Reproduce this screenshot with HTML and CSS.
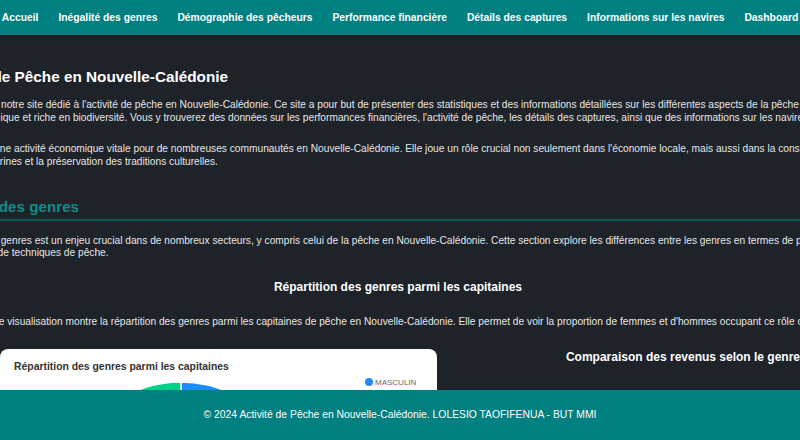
FILE: index.html
```html
<!DOCTYPE html>
<html lang="fr">
<head>
    <meta charset="UTF-8">
    <meta name="viewport" content="width=device-width, initial-scale=1.0">
    <title>Activité de Pêche en Nouvelle-Calédonie</title>
    <link rel="stylesheet" href="styles.css">
</head>
<body>
    <nav class="navbar">
        <ul class="nav-links">
            <li><a href="#">Accueil</a></li>
            <li><a href="#">Inégalité des genres</a></li>
            <li><a href="#">Démographie des pêcheurs</a></li>
            <li><a href="#">Performance financière</a></li>
            <li><a href="#">Détails des captures</a></li>
            <li><a href="#">Informations sur les navires</a></li>
            <li><a href="#">Dashboard</a></li>
        </ul>
    </nav>

    <main class="container">
        <section class="intro">
            <h1>Activité de Pêche en Nouvelle-Calédonie</h1>
            <p>Bienvenue sur notre site dédié à l'activité de pêche en Nouvelle-Calédonie. Ce site a pour but de présenter des statistiques et des informations détaillées sur les différentes aspects de la pêche au sein de cette région unique et riche en biodiversité. Vous y trouverez des données sur les performances financières, l'activité de pêche, les détails des captures, ainsi que des informations sur les navires de pêche.</p>
            <p>La pêche est une activité économique vitale pour de nombreuses communautés en Nouvelle-Calédonie. Elle joue un rôle crucial non seulement dans l'économie locale, mais aussi dans la conservation des ressources marines et la préservation des traditions culturelles.</p>
        </section>

        <section class="section">
            <h2>Inégalité des genres</h2>
            <p>L'inégalité des genres est un enjeu crucial dans de nombreux secteurs, y compris celui de la pêche en Nouvelle-Calédonie. Cette section explore les différences entre les genres en termes de participation, de revenus et de techniques de pêche.</p>

            <h3>Répartition des genres parmi les capitaines</h3>
            <p>Cette deuxième visualisation montre la répartition des genres parmi les capitaines de pêche en Nouvelle-Calédonie. Elle permet de voir la proportion de femmes et d'hommes occupant ce rôle clé.</p>

            <div class="chart-grid">
                <div class="chart-card">
                    <div class="chart-title">Répartition des genres parmi les capitaines</div>
                    <div class="chart-body">
                        <svg class="pie" width="334" height="240" viewBox="0 0 334 240">
                            <!-- masculin -->
                            <path d="M167 119 L167 2 A117 117 0 1 1 98.2 24.3 Z" fill="#1a8cff" stroke="#fff" stroke-width="1.5"/>
                            <!-- feminin -->
                            <path d="M167 119 L98.2 24.3 A117 117 0 0 1 167 2 Z" fill="#00d084" stroke="#fff" stroke-width="1.5"/>
                        </svg>
                        <ul class="legend">
                            <li><span class="dot dot-blue"></span>MASCULIN</li>
                            <li><span class="dot dot-green"></span>FÉMININ</li>
                        </ul>
                    </div>
                </div>
                <div class="chart-side">
                    <h3>Comparaison des revenus selon le genre</h3>
                </div>
            </div>
        </section>
    </main>

    <footer class="footer">
        <p>&copy; 2024 Activité de Pêche en Nouvelle-Calédonie. LOLESIO TAOFIFENUA - BUT MMI</p>
    </footer>
</body>
</html>
```

FILE: styles.css
```css
* {
    margin: 0;
    padding: 0;
    box-sizing: border-box;
}

body {
    background-color: #1e2229;
    color: #e6e6e6;
    font-family: "Liberation Sans", Arial, sans-serif;
    font-size: 10.2px;
    overflow: hidden;
    height: 440px;
}

.navbar {
    background-color: #008080;
    height: 35px;
    display: flex;
    justify-content: center;
    box-shadow: 0 1px 2px rgba(0, 0, 0, 0.6);
}

.nav-links {
    list-style: none;
    display: flex;
    align-items: center;
    gap: 20px;
    white-space: nowrap;
}

.nav-links a {
    color: #fff;
    text-decoration: none;
    font-weight: bold;
    font-size: 10.3px;
}

.container {
    width: 930px;
    margin-left: -67px;
    padding-top: 33px;
}

h1 {
    color: #fff;
    font-size: 15.3px;
    line-height: 17px;
    margin-bottom: 14px;
}

p {
    line-height: 12.5px;
}

.intro p {
    line-height: 12.7px;
}

.intro p + p {
    margin-top: 19px;
}

.section {
    margin-top: 29px;
}

h2 {
    color: #0e8c87;
    font-size: 15.2px;
    line-height: 17px;
    padding-bottom: 4px;
    border-bottom: 2px solid #0b5753;
    margin-bottom: 14px;
}

h3 {
    color: #fff;
    font-size: 12px;
    line-height: 14px;
    text-align: center;
    margin: 20px 0 22px;
}

.chart-grid {
    display: grid;
    grid-template-columns: 504px 1fr;
    margin-top: 21px;
}

.chart-card {
    background-color: #fff;
    border-radius: 8px;
    padding: 12px 14px;
    height: 300px;
    margin-left: 67px;
}

.chart-title {
    color: #333;
    font-weight: bold;
    font-size: 10.4px;
    line-height: 12px;
}

.chart-body {
    display: flex;
    align-items: flex-start;
    margin-top: 7px;
}

.legend {
    list-style: none;
    margin-left: 17px;
    margin-top: -3px;
    color: #666;
    font-size: 8px;
}

.legend li {
    display: flex;
    align-items: center;
    gap: 2px;
    height: 10px;
    margin-bottom: 4px;
}

.dot {
    width: 8px;
    height: 8px;
    border-radius: 50%;
}

.dot-blue {
    background-color: #1a8cff;
}

.dot-green {
    background-color: #00d084;
}

.chart-side {
    padding-left: 66px;
}

.chart-side h3 {
    margin: 1px 0 0;
}

.footer {
    position: fixed;
    left: 0;
    right: 0;
    bottom: 0;
    height: 50px;
    background-color: #008080;
    display: flex;
    align-items: center;
    justify-content: center;
    color: #fff;
    font-size: 10.35px;
}
```
